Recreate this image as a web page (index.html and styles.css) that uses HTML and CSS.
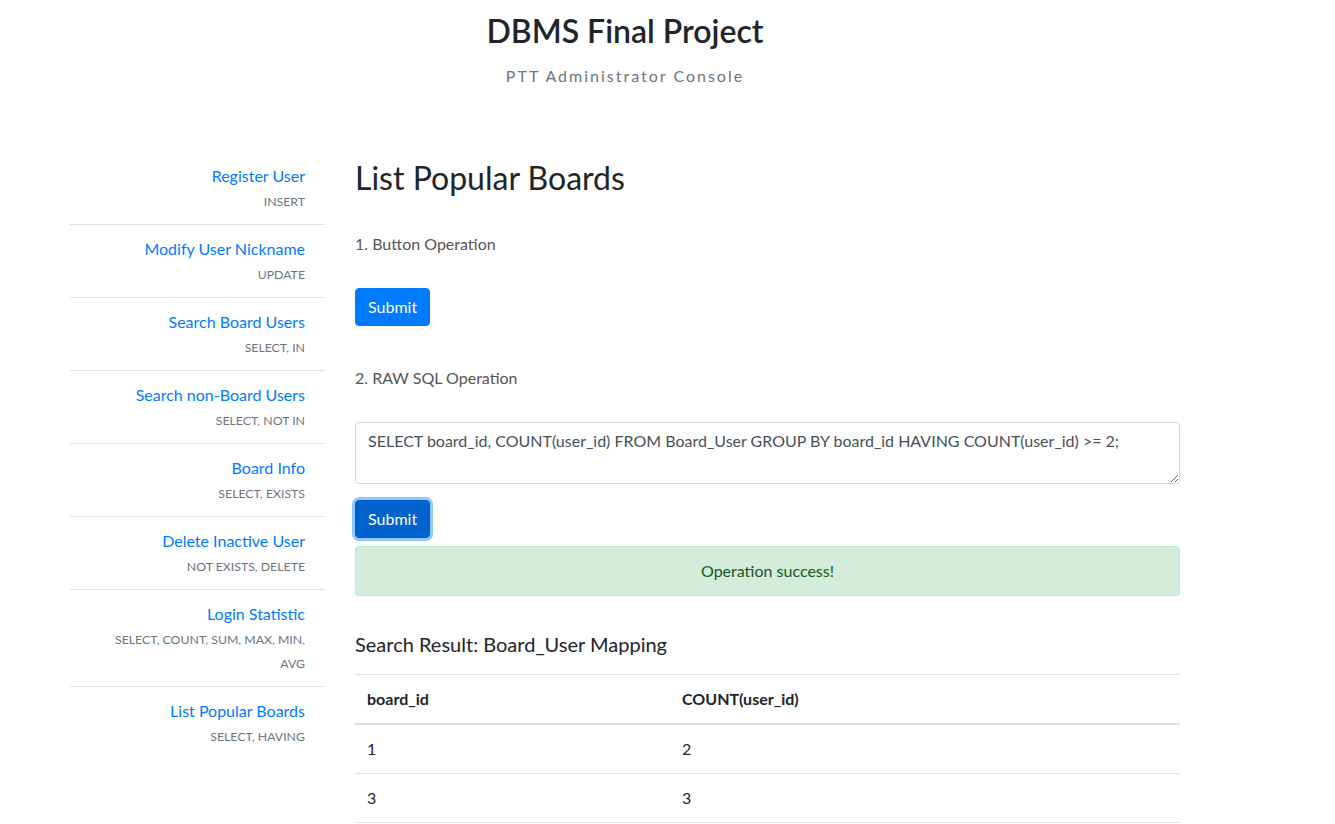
FILE: index.html
```html
<!DOCTYPE html>
<html lang="en">
<head>
<meta charset="utf-8">
<title>DBMS Final Project</title>
<link rel="stylesheet" href="styles.css">
</head>
<body>
<div class="container">
  <header class="page-header">
    <h1 class="title">DBMS Final Project</h1>
    <p class="subtitle">PTT Administrator Console</p>
  </header>
  <div class="row">
    <nav class="sidebar">
      <div class="nav-item"><a href="#" class="nav-link">Register User</a><div class="nav-sub">INSERT</div></div>
      <div class="nav-item"><a href="#" class="nav-link">Modify User Nickname</a><div class="nav-sub">UPDATE</div></div>
      <div class="nav-item"><a href="#" class="nav-link">Search Board Users</a><div class="nav-sub">SELECT, IN</div></div>
      <div class="nav-item"><a href="#" class="nav-link">Search non-Board Users</a><div class="nav-sub">SELECT, NOT IN</div></div>
      <div class="nav-item"><a href="#" class="nav-link">Board Info</a><div class="nav-sub">SELECT, EXISTS</div></div>
      <div class="nav-item"><a href="#" class="nav-link">Delete Inactive User</a><div class="nav-sub">NOT EXISTS, DELETE</div></div>
      <div class="nav-item"><a href="#" class="nav-link">Login Statistic</a><div class="nav-sub">SELECT, COUNT, SUM, MAX, MIN, AVG</div></div>
      <div class="nav-item last"><a href="#" class="nav-link">List Popular Boards</a><div class="nav-sub">SELECT, HAVING</div></div>
    </nav>
    <main class="main">
      <h2 class="page-title">List Popular Boards</h2>
      <p class="step">1. Button Operation</p>
      <button class="btn">Submit</button>
      <p class="step step-2">2. RAW SQL Operation</p>
      <textarea class="sql" rows="2">SELECT board_id, COUNT(user_id) FROM Board_User GROUP BY board_id HAVING COUNT(user_id) &gt;= 2;</textarea>
      <button class="btn btn-focus">Submit</button>
      <div class="alert">Operation success!</div>
      <h3 class="result-title">Search Result: Board_User Mapping</h3>
      <table class="table">
        <thead><tr><th class="col1">board_id</th><th>COUNT(user_id)</th></tr></thead>
        <tbody>
          <tr><td>1</td><td>2</td></tr>
          <tr><td>3</td><td>3</td></tr>
        </tbody>
      </table>
    </main>
  </div>
</div>
</body>
</html>
```
FILE: styles.css
```css
* { box-sizing: border-box; }
body {
  margin: 0;
  font-family: "Lato", "Open Sans", sans-serif;
  font-size: 16px;
  line-height: 24px;
  color: #212529;
  background: #fff;
}
.container {
  width: 1140px;
  margin-left: 55px;
  padding: 0 15px;
}
.page-header {
  text-align: center;
  padding-top: 12px;
}
.title {
  margin: 0;
  font-size: 32px;
  line-height: 38px;
  font-weight: 600;
}
.subtitle {
  margin: 14px 0 0;
  color: #6c757d;
  letter-spacing: 2px;
}
.row {
  display: flex;
  gap: 30px;
  margin-top: 64px;
}
.sidebar {
  width: 255px;
  flex: none;
  text-align: right;
}
.nav-item {
  padding: 12px 20px 10px;
  border-bottom: 1px solid #dee2e6;
}
.nav-item.last { border-bottom: none; }
.nav-link {
  display: block;
  color: #007bff;
  text-decoration: none;
}
.nav-sub {
  padding-top: 2px;
  font-size: 12.3px;
  color: #6c757d;
}
.main {
  flex: 1;
  min-width: 0;
}
.page-title {
  margin: 7px 0 0;
  font-size: 32px;
  line-height: 38px;
  font-weight: 400;
}
.step {
  margin: 35px 0 0;
  color: #555;
}
.step-2 { margin-top: 40px; }
.btn {
  display: block;
  margin-top: 32px;
  height: 38px;
  padding: 6px 12px;
  font: inherit;
  color: #fff;
  background: #007bff;
  border: 1px solid #007bff;
  border-radius: 4px;
}
.sql {
  display: block;
  width: 100%;
  height: 62px;
  margin-top: 32px;
  padding: 6px 12px;
  font: inherit;
  color: #495057;
  border: 1px solid #ced4da;
  border-radius: 4px;
}
.btn-focus {
  margin-top: 16px;
  background: #0062cc;
  border-color: #005cbf;
  box-shadow: 0 0 0 3px rgba(38, 143, 255, 0.5);
}
.alert {
  margin-top: 8px;
  padding: 12px 20px;
  text-align: center;
  color: #155724;
  background: #d4edda;
  border: 1px solid #c3e6cb;
  border-radius: 4px;
}
.result-title {
  margin: 36px 0 0;
  font-size: 20px;
  line-height: 24px;
  font-weight: 400;
}
.table {
  width: 100%;
  margin-top: 18px;
  border-collapse: collapse;
}
.table th, .table td {
  padding: 12px;
  text-align: left;
  border-top: 1px solid #dee2e6;
}
.table th { border-bottom: 2px solid #dee2e6; }
.table td { border-bottom: 1px solid #dee2e6; }
.col1 { width: 315px; }
```
